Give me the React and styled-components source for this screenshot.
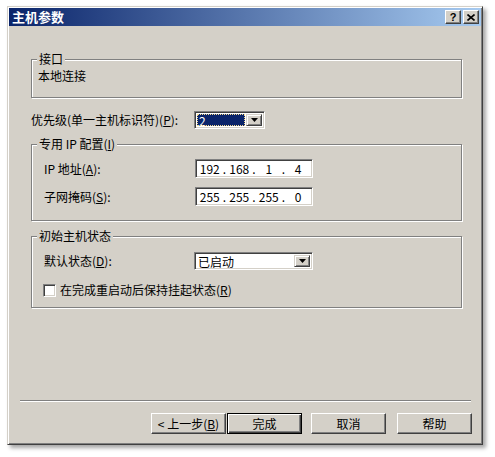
import React from 'react';
import styled, { createGlobalStyle, css } from 'styled-components';

const GlobalStyle = createGlobalStyle`
    body {
        margin: 0;
        background: #ffffff;
        font-family: "Noto Sans CJK SC", "Noto Sans", sans-serif;
        font-size: 12px;
        color: #000;
    }
`;

const Page = styled.div`
    padding: 6px 0 0 7px;
    height: 457px;
    box-sizing: border-box;
`;

const Window = styled.div`
    display: flex;
    flex-direction: column;
    width: 476px;
    height: 439px;
    box-sizing: border-box;
    padding: 1px;
    background: #d4d0c8;
    border: 1px solid;
    border-color: #d4d0c8 #404040 #404040 #d4d0c8;
    box-shadow: inset 1px 1px #ffffff, inset -1px -1px #808080, 3px 3px 4px rgba(0, 0, 0, 0.35);
`;

const TitleBar = styled.div`
    display: flex;
    align-items: flex-start;
    height: 18px;
    padding: 0 2px 0 3px;
    background: linear-gradient(to right, #0a246a, #a6caf0);
`;

const Title = styled.div`
    flex: 1;
    color: #ffffff;
    font-weight: bold;
    font-size: 13px;
    line-height: 18px;
`;

const CaptionButton = styled.div`
    display: flex;
    align-items: center;
    justify-content: center;
    width: 16px;
    height: 14px;
    margin-top: 2px;
    margin-left: ${p => p.$gap || 0}px;
    box-sizing: border-box;
    background: #d4d0c8;
    border: 1px solid;
    border-color: #ffffff #404040 #404040 #ffffff;
    box-shadow: inset -1px -1px #808080;
    font-family: "Liberation Sans", sans-serif;
    font-weight: bold;
    font-size: 11px;
    line-height: 1;
`;

const Client = styled.div`
    flex: 1;
    display: flex;
    flex-direction: column;
`;

const Groups = styled.div`
    display: flex;
    flex-direction: column;
    padding: 0 19px 0 22px;
`;

const GroupBox = styled.fieldset`
    margin: ${p => p.$top}px 0 0 0;
    padding: 0;
    min-width: 0;
    border: 1px solid #808080;
    box-shadow: 1px 1px 0 #ffffff, inset 1px 1px 0 #ffffff;
`;

const Legend = styled.legend`
    margin-left: 5px;
    padding: 0 2px;
    line-height: 14px;
    background: #d4d0c8;
`;

const GroupBody = styled.div`
    display: flex;
    flex-direction: column;
    gap: ${p => p.$gap || 0}px;
    padding: ${p => p.$pad};
    line-height: 14px;
`;

const FormRow = styled.div`
    display: grid;
    grid-template-columns: ${p => p.$label}px auto;
    align-items: center;
    margin-top: ${p => p.$top || 0}px;
    line-height: 14px;
`;

const sunken = css`
    box-sizing: border-box;
    border: 1px solid;
    border-color: #808080 #ffffff #ffffff #808080;
    box-shadow: inset 1px 1px #404040, inset -1px -1px #d4d0c8;
    background: #ffffff;
`;

const Combo = styled.div`
    ${sunken};
    display: flex;
    width: ${p => p.$w}px;
    height: 18px;
    padding: 2px;
`;

const ComboValue = styled.div`
    flex: 1;
    padding-left: 1px;
    line-height: 14px;
    ${p => p.$selected && css`
        margin-right: 1px;
        background: #0a246a;
        color: #ffffff;
        outline: 1px dotted #f3d98c;
        outline-offset: -1px;
        padding-left: 2px;
    `}
`;

const DropButton = styled.div`
    display: flex;
    align-items: center;
    justify-content: center;
    width: 16px;
    box-sizing: border-box;
    background: #d4d0c8;
    border: 1px solid;
    border-color: #d4d0c8 #404040 #404040 #d4d0c8;
    box-shadow: inset 1px 1px #ffffff, inset -1px -1px #808080;
`;

const IpBox = styled.div`
    ${sunken};
    display: flex;
    align-items: center;
    width: 118px;
    height: 19px;
    padding: 0 2px;
    line-height: 14px;
`;

const IpField = styled.span`
    width: 24px;
    text-align: center;
`;

const IpDot = styled.span`
    width: 6px;
    text-align: center;
`;

const CheckRow = styled.label`
    display: flex;
    align-items: center;
    gap: 4px;
    margin-left: -1px;
`;

const CheckBox = styled.span`
    ${sunken};
    width: 13px;
    height: 13px;
`;

const Footer = styled.div`
    margin-top: auto;
    display: flex;
    flex-direction: column;
`;

const Separator = styled.div`
    height: 0;
    margin: 0 10px 0 11px;
    border-top: 1px solid #808080;
    border-bottom: 1px solid #ffffff;
`;

const ButtonRow = styled.div`
    display: flex;
    justify-content: flex-end;
    padding: 11px 9px 9px 0;
`;

const Button = styled.button`
    width: 75px;
    height: 21px;
    box-sizing: border-box;
    margin: 0 0 0 ${p => p.$gap || 0}px;
    padding: 0;
    background: #d4d0c8;
    border: 1px solid;
    border-color: #ffffff #404040 #404040 #ffffff;
    box-shadow: inset -1px -1px #808080;
    font-family: inherit;
    font-size: 12px;
    line-height: 14px;
    color: #000;
    ${p => p.$default && css`
        border-color: #000000;
        box-shadow: inset 1px 1px #ffffff, inset -1px -1px #404040, inset -2px -2px #808080;
    `}
`;

function Arrow() {
    return (
        <svg width="7" height="4" viewBox="0 0 7 4">
            <polygon points="0,0 7,0 3.5,4" fill="#000" />
        </svg>
    );
}

function Ip({ parts }) {
    return (
        <IpBox>
            {parts.map((p, i) => (
                <React.Fragment key={i}>
                    {i > 0 && <IpDot>.</IpDot>}
                    <IpField>{p}</IpField>
                </React.Fragment>
            ))}
        </IpBox>
    );
}

export default function App() {
    return (
        <Page>
            <GlobalStyle />
            <Window>
                <TitleBar>
                    <Title>主机参数</Title>
                    <CaptionButton>?</CaptionButton>
                    <CaptionButton $gap={2}>
                        <svg width="8" height="7" viewBox="0 0 8 7">
                            <path d="M0.5 0.5 L7.5 6.5 M7.5 0.5 L0.5 6.5" stroke="#000" strokeWidth="1.6" />
                        </svg>
                    </CaptionButton>
                </TitleBar>
                <Client>
                    <Groups>
                        <GroupBox $top={26}>
                            <Legend>接口</Legend>
                            <GroupBody $pad="3px 0 14px 6px">本地连接</GroupBody>
                        </GroupBox>

                        <FormRow $label={163} $top={13}>
                            <span>优先级(单一主机标识符)(<u>P</u>):</span>
                            <Combo $w={71}>
                                <ComboValue $selected>2</ComboValue>
                                <DropButton><Arrow /></DropButton>
                            </Combo>
                        </FormRow>

                        <GroupBox $top={8}>
                            <Legend>专用 IP 配置(<u>I</u>)</Legend>
                            <GroupBody $pad="8px 0 14px 12px" $gap={9}>
                                <FormRow $label={151}>
                                    <span>IP 地址(<u>A</u>):</span>
                                    <Ip parts={['192', '168', '1', '4']} />
                                </FormRow>
                                <FormRow $label={151}>
                                    <span>子网掩码(<u>S</u>):</span>
                                    <Ip parts={['255', '255', '255', '0']} />
                                </FormRow>
                            </GroupBody>
                        </GroupBox>

                        <GroupBox $top={8}>
                            <Legend>初始主机状态</Legend>
                            <GroupBody $pad="9px 0 10px 12px" $gap={13}>
                                <FormRow $label={150}>
                                    <span>默认状态(<u>D</u>):</span>
                                    <Combo $w={119}>
                                        <ComboValue>已启动</ComboValue>
                                        <DropButton><Arrow /></DropButton>
                                    </Combo>
                                </FormRow>
                                <CheckRow>
                                    <CheckBox />
                                    <span>在完成重启动后保持挂起状态(<u>R</u>)</span>
                                </CheckRow>
                            </GroupBody>
                        </GroupBox>
                    </Groups>

                    <Footer>
                        <Separator />
                        <ButtonRow>
                            <Button>&lt; 上一步(<u>B</u>)</Button>
                            <Button $default $gap={1}>完成</Button>
                            <Button $gap={9}>取消</Button>
                            <Button $gap={11}>帮助</Button>
                        </ButtonRow>
                    </Footer>
                </Client>
            </Window>
        </Page>
    );
}
